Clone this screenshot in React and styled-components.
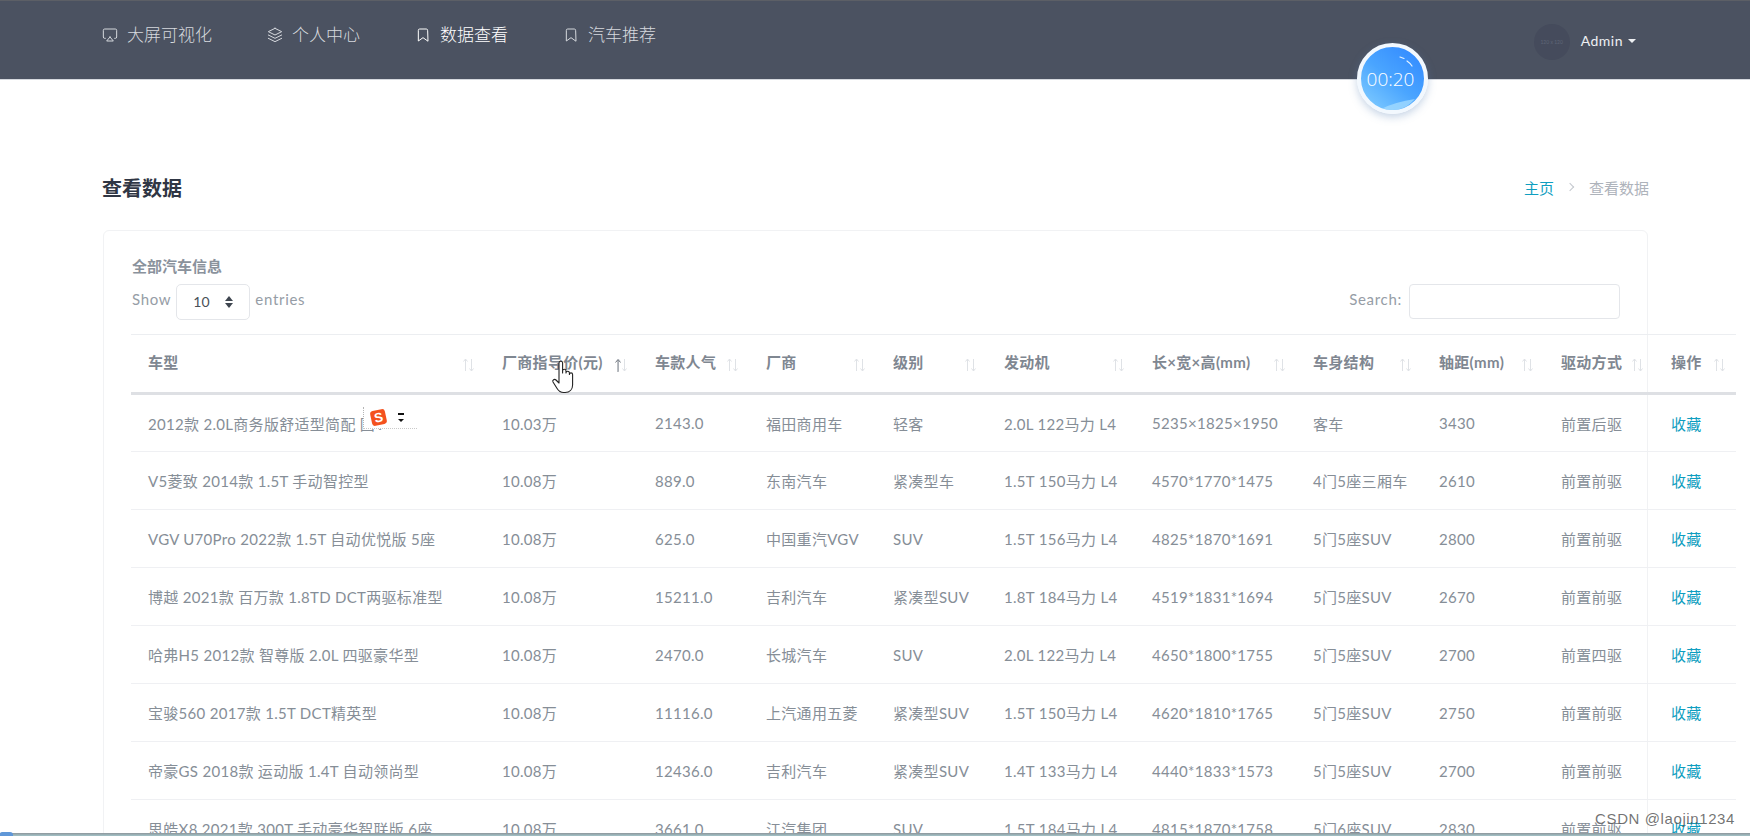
import React from 'react'
import styled, { createGlobalStyle } from 'styled-components'
import { FiAirplay, FiLayers, FiBookmark } from 'react-icons/fi'

const FONT = `Lato, "Noto Sans CJK SC", sans-serif`

const columns = [
  { title: '车型', width: 354 },
  { title: '厂商指导价(元)', width: 153, active: true },
  { title: '车款人气', width: 111 },
  { title: '厂商', width: 127 },
  { title: '级别', width: 111 },
  { title: '发动机', width: 148 },
  { title: '长×宽×高(mm)', width: 161 },
  { title: '车身结构', width: 126 },
  { title: '轴距(mm)', width: 122 },
  { title: '驱动方式', width: 110 },
  { title: '操作', width: 82 },
]

const rows = [
  ['2012款 2.0L商务版舒适型简配 国V', '10.03万', '2143.0', '福田商用车', '轻客', '2.0L 122马力 L4', '5235×1825×1950', '客车', '3430', '前置后驱'],
  ['V5菱致 2014款 1.5T 手动智控型', '10.08万', '889.0', '东南汽车', '紧凑型车', '1.5T 150马力 L4', '4570*1770*1475', '4门5座三厢车', '2610', '前置前驱'],
  ['VGV U70Pro 2022款 1.5T 自动优悦版 5座', '10.08万', '625.0', '中国重汽VGV', 'SUV', '1.5T 156马力 L4', '4825*1870*1691', '5门5座SUV', '2800', '前置前驱'],
  ['博越 2021款 百万款 1.8TD DCT两驱标准型', '10.08万', '15211.0', '吉利汽车', '紧凑型SUV', '1.8T 184马力 L4', '4519*1831*1694', '5门5座SUV', '2670', '前置前驱'],
  ['哈弗H5 2012款 智尊版 2.0L 四驱豪华型', '10.08万', '2470.0', '长城汽车', 'SUV', '2.0L 122马力 L4', '4650*1800*1755', '5门5座SUV', '2700', '前置四驱'],
  ['宝骏560 2017款 1.5T DCT精英型', '10.08万', '11116.0', '上汽通用五菱', '紧凑型SUV', '1.5T 150马力 L4', '4620*1810*1765', '5门5座SUV', '2750', '前置前驱'],
  ['帝豪GS 2018款 运动版 1.4T 自动领尚型', '10.08万', '12436.0', '吉利汽车', '紧凑型SUV', '1.4T 133马力 L4', '4440*1833*1573', '5门5座SUV', '2700', '前置前驱'],
  ['思皓X8 2021款 300T 手动豪华智联版 6座', '10.08万', '3661.0', '江汽集团', 'SUV', '1.5T 184马力 L4', '4815*1870*1758', '5门6座SUV', '2830', '前置前驱'],
]

const GlobalStyle = createGlobalStyle`
  html, body {
    margin: 0;
    height: 836px;
    overflow: hidden;
    background: #fff;
    font-family: ${FONT};
  }
`

const Page = styled.div`
  position: relative;
  width: 1750px;
  height: 836px;
  overflow: hidden;
`

const Header = styled.header`
  background: #4b5261;
  border-top: 1px solid #5c5f66;
  border-bottom: 1px solid #d5d8de;
  box-sizing: border-box;
  height: 80px;
  padding: 0 102px;
  display: flex;
  justify-content: space-between;
`

const Nav = styled.nav`
  display: flex;
  gap: 55px;
  padding-top: 22px;
  align-items: flex-start;
`

const NavItem = styled.a`
  display: flex;
  align-items: center;
  gap: 9px;
  font-size: 17px;
  line-height: 24px;
  font-weight: 300;
  color: ${p => (p.$active ? '#ffffff' : '#d6d9de')};
  svg {
    font-size: 16px;
    stroke-width: 1.5;
  }
`

const UserMenu = styled.div`
  display: flex;
  align-items: center;
  align-self: flex-start;
  margin: 23px 12px 0 0;
  color: #eef0f3;
  font-size: 14px;
  letter-spacing: 0.5px;
`

const Avatar = styled.div`
  width: 36px;
  height: 36px;
  border-radius: 50%;
  background: #454b5c;
  color: #5f6677;
  font-size: 5px;
  letter-spacing: 0;
  display: flex;
  align-items: center;
  justify-content: center;
`

const UserName = styled.span`
  margin: 0 5px 3px 11px;
`

const Caret = styled.span`
  width: 0;
  height: 0;
  margin-bottom: 2px;
  border-left: 4px solid transparent;
  border-right: 4px solid transparent;
  border-top: 4px solid #eef0f3;
`

const Timer = styled.div`
  position: absolute;
  left: 1357px;
  top: 43px;
  width: 71px;
  height: 71px;
  border-radius: 50%;
  box-sizing: border-box;
  border: 4px solid #f2f8fe;
  background: linear-gradient(40deg, #7cc9ff 8%, #4aa5ff 48%, #2f86ff 100%);
  box-shadow: 0 3px 8px rgba(90, 130, 180, 0.35);
  color: #fff;
  font-size: 19px;
  display: flex;
  align-items: center;
  justify-content: center;
  overflow: hidden;
  svg {
    position: absolute;
    inset: 0;
  }
  span {
    position: relative;
    margin: 0 4px 0 0;
    font-family: "Open Sans", sans-serif;
    font-weight: 300;
  }
`

const Main = styled.main`
  width: 1545px;
  margin-left: 103px;
`

const TitleRow = styled.div`
  display: flex;
  justify-content: space-between;
  align-items: center;
  height: 28px;
  margin-top: 93px;
`

const Title = styled.h1`
  margin: 0 0 0 -1px;
  font-size: 20px;
  font-weight: 700;
  color: #2f3644;
`

const Breadcrumb = styled.div`
  display: flex;
  align-items: center;
  font-size: 15px;
  margin: 0 -1px 0 0;
`

const Crumb = styled.span`
  color: ${p => (p.$link ? '#0f9ec0' : '#aeb3bb')};
`

const CrumbSep = styled.span`
  width: 5px;
  height: 5px;
  margin: 0 16px 0 13px;
  border-top: 1px solid #c3c7cd;
  border-right: 1px solid #c3c7cd;
  transform: rotate(45deg);
`

const Card = styled.section`
  box-sizing: border-box;
  margin-top: 29px;
  height: 700px;
  padding: 25px 27px 0 27px;
  border: 1px solid #f1f2f4;
  border-radius: 6px;
`

const CardTitle = styled.h2`
  margin: 0 0 0 1px;
  font-size: 15px;
  line-height: 20px;
  font-weight: 700;
  color: #8a929c;
`

const Controls = styled.div`
  display: flex;
  justify-content: space-between;
  margin: 8px 0 0 1px;
  height: 50px;
`

const ControlGroup = styled.label`
  display: flex;
  align-items: flex-start;
  gap: ${p => p.$gap || 5}px;
  font-size: 15px;
  line-height: 30px;
  font-weight: 400;
  letter-spacing: 0.7px;
  color: #969da6;
`

const SelectBox = styled.div`
  box-sizing: border-box;
  width: 74px;
  height: 36px;
  border: 1px solid #e4e6ea;
  border-radius: 5px;
  padding: 0 16px;
  display: flex;
  align-items: center;
  justify-content: space-between;
  color: #495057;
  font-size: 14px;
  letter-spacing: 0;
`

const Stepper = styled.span`
  display: flex;
  flex-direction: column;
  gap: 2px;
  i {
    width: 0;
    height: 0;
    border-left: 4px solid transparent;
    border-right: 4px solid transparent;
  }
  i:first-child {
    border-bottom: 5px solid #3f4650;
  }
  i:last-child {
    border-top: 5px solid #3f4650;
  }
`

const SearchInput = styled.div`
  box-sizing: border-box;
  width: 211px;
  height: 35px;
  border: 1px solid #e4e6ea;
  border-radius: 4px;
`

const Table = styled.table`
  border-collapse: collapse;
  table-layout: fixed;
  width: 1605px;
  font-size: 15px;
  letter-spacing: 0.3px;
  color: #868e97;
  font-weight: 400;
`

const Col = styled.col`
  width: ${p => p.$width}px;
`

const HeadCell = styled.th`
  position: relative;
  height: 59px;
  box-sizing: border-box;
  padding: 0 0 5px 17px;
  text-align: left;
  white-space: nowrap;
  font-weight: 700;
  font-size: 15px;
  color: #7f8791;
  border-top: 1px solid #eceef1;
  border-bottom: 3px solid #dee0e4;
`

const SortIcon = styled.svg`
  position: absolute;
  right: 10px;
  top: 23px;
`

const Row = styled.tr`
  height: 58px;
`

const Cell = styled.td`
  box-sizing: border-box;
  padding: 0 0 0 17px;
  white-space: nowrap;
  overflow: hidden;
  border-bottom: 1px solid #eff0f3;
`

const ActionLink = styled.a`
  color: #0f9ec0;
`

const ImeBar = styled.div`
  position: absolute;
  left: 363px;
  top: 407px;
  width: 46px;
  height: 21px;
  background: #fff;
  border-left: 1px dotted #b5b5b5;
  border-bottom: 1px dotted #c9c9c9;
  display: flex;
  align-items: center;
  padding-left: 7px;
  gap: 12px;
`

const ImeLogo = styled.span`
  width: 15px;
  height: 15px;
  background: #f4511e;
  border-radius: 3px;
  transform: rotate(-12deg);
  color: #fff;
  font: 700 13px/15px "Liberation Sans", sans-serif;
  text-align: center;
`

const ImeArrows = styled.span`
  display: flex;
  flex-direction: column;
  gap: 4px;
  i {
    width: 6px;
    height: 2px;
    background: #111;
  }
  b {
    width: 0;
    height: 0;
    border-left: 3px solid transparent;
    border-right: 3px solid transparent;
    border-top: 3px solid #111;
  }
`

const HandCursor = styled.svg`
  position: absolute;
  left: 551px;
  top: 360px;
`

const SortMark = styled.svg`
  position: absolute;
  left: 613px;
  top: 358px;
`

const Watermark = styled.div`
  position: absolute;
  right: 15px;
  top: 810px;
  font-family: "Liberation Sans", sans-serif;
  font-size: 15px;
  letter-spacing: 0.6px;
  color: rgba(90, 90, 90, 0.85);
`

const TaskbarLine = styled.div`
  position: absolute;
  left: 0;
  right: 0;
  bottom: 0;
  height: 3px;
  background: linear-gradient(#8d969c, #a3c4c8);
`

const TaskbarTab = styled.div`
  position: absolute;
  left: 0;
  bottom: 0;
  width: 13px;
  height: 4px;
  border-radius: 2px 3px 0 0;
  background: #5f97d8;
`

function SortArrows() {
  return (
    <SortIcon width="13" height="14" viewBox="0 0 13 14" fill="none" stroke="#dfe2e6" strokeWidth="1">
      <path d="M3.5 13V1M1.5 3.5 3.5 1l2 2.5M9.5 1v12M7.5 10.500 9.500 13l2-2.500" />
    </SortIcon>
  )
}

export default function App() {
  return (
    <Page>
      <GlobalStyle />
      <Header>
        <Nav>
          <NavItem><FiAirplay />大屏可视化</NavItem>
          <NavItem><FiLayers />个人中心</NavItem>
          <NavItem $active><FiBookmark />数据查看</NavItem>
          <NavItem><FiBookmark />汽车推荐</NavItem>
        </Nav>
        <UserMenu>
          <Avatar>120 x 120</Avatar>
          <UserName>Admin</UserName>
          <Caret />
        </UserMenu>
      </Header>

      <Main>
        <TitleRow>
          <Title>查看数据</Title>
          <Breadcrumb>
            <Crumb $link>主页</Crumb>
            <CrumbSep />
            <Crumb>查看数据</Crumb>
          </Breadcrumb>
        </TitleRow>

        <Card>
          <CardTitle>全部汽车信息</CardTitle>
          <Controls>
            <ControlGroup>
              Show
              <SelectBox>10<Stepper><i /><i /></Stepper></SelectBox>
              entries
            </ControlGroup>
            <ControlGroup $gap={7}>
              Search:
              <SearchInput />
            </ControlGroup>
          </Controls>
          <Table>
            <colgroup>
              {columns.map(c => <Col key={c.title} $width={c.width} />)}
            </colgroup>
            <thead>
              <tr>
                {columns.map(c => (
                  <HeadCell key={c.title}>
                    {c.title}
                    <SortArrows />
                  </HeadCell>
                ))}
              </tr>
            </thead>
            <tbody>
              {rows.map(r => (
                <Row key={r[0]}>
                  {r.map((v, i) => <Cell key={i}>{v}</Cell>)}
                  <Cell><ActionLink>收藏</ActionLink></Cell>
                </Row>
              ))}
            </tbody>
          </Table>
        </Card>
      </Main>

      <Timer>
        <svg viewBox="0 0 63 63" width="63" height="63" fill="none">
          <path d="M20 62 Q34 55 54 52 Q44 63 32 64 Z" fill="#a5dcff" opacity="0.75" />
          <path d="M39 10 l4 1.500M46 14 q3 2 5 5" stroke="#e6f3ff" strokeWidth="1.200" strokeLinecap="round" />
        </svg>
        <span>00:20</span>
      </Timer>

      <ImeBar>
        <ImeLogo>S</ImeLogo>
        <ImeArrows><i /><b /></ImeArrows>
      </ImeBar>

      <SortMark width="10" height="15" viewBox="0 0 10 15" fill="none" stroke="#777d85" strokeWidth="1">
        <path d="M5 14V2M2.500 4.500 5 1.500l2.500 3" />
      </SortMark>

      <HandCursor width="26" height="34" viewBox="0 0 26 34" fill="#fff" stroke="#222" strokeWidth="1.100" strokeLinejoin="round">
        <path d="M8 19V3a1.800 1.800 0 0 1 3.600 0v10l0-2a1.700 1.700 0 0 1 3.400 0v2a1.700 1.700 0 0 1 3.400 0v1.500a1.600 1.600 0 0 1 3.200 0V25c0 4.500-3 7.500-7.500 7.500h-1.500c-3 0-5-1.500-6.500-4L2 22c-1-2 1.500-3.500 3-2l3 3z" />
      </HandCursor>

      <Watermark>CSDN @laojin1234</Watermark>
      <TaskbarLine />
      <TaskbarTab />
    </Page>
  )
}
